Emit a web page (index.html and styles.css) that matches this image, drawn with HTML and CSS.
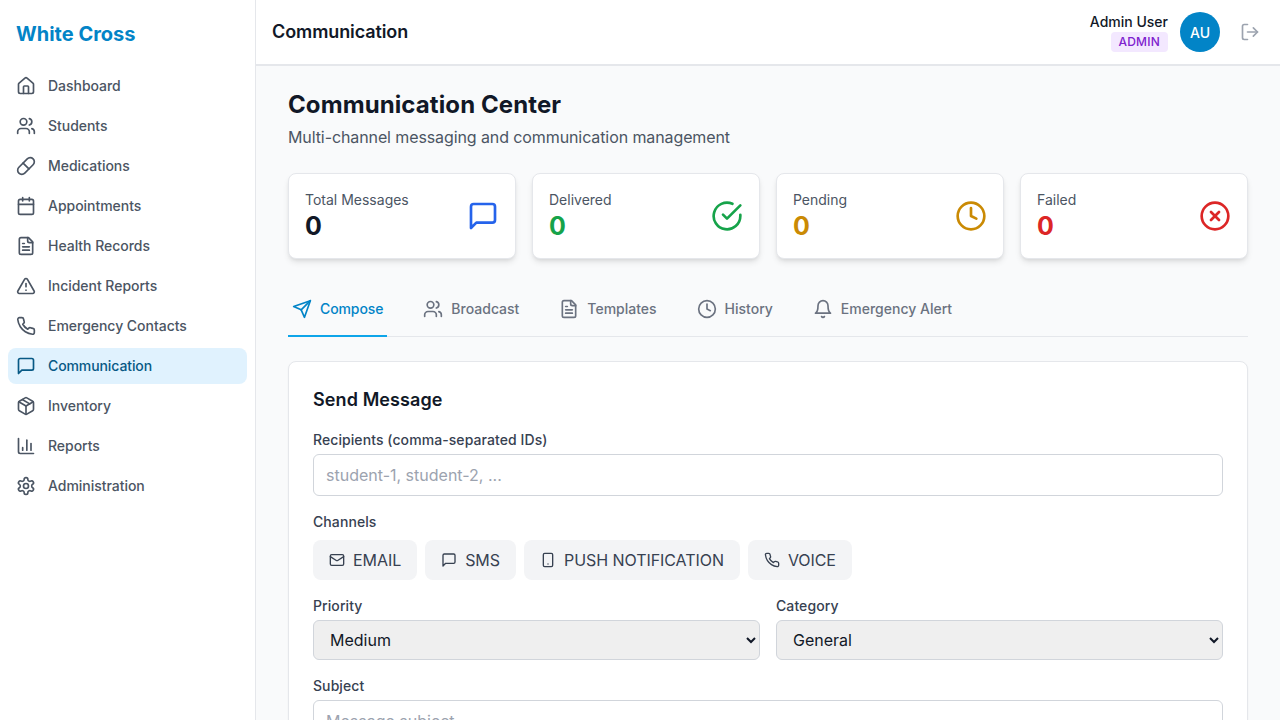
FILE: index.html
```html
<!DOCTYPE html>
<html lang="en">
<head>
    <meta charset="UTF-8">
    <meta name="viewport" content="width=device-width, initial-scale=1.0">
    <title>Communication - White Cross</title>
    <link rel="stylesheet" href="styles.css">
</head>
<body>
<svg class="sprite" xmlns="http://www.w3.org/2000/svg">
    <symbol id="i-house" viewBox="0 0 24 24"><path d="M15 21v-8a1 1 0 0 0-1-1h-4a1 1 0 0 0-1 1v8"/><path d="M3 10a2 2 0 0 1 .709-1.528l7-5.999a2 2 0 0 1 2.582 0l7 5.999A2 2 0 0 1 21 10v9a2 2 0 0 1-2 2H5a2 2 0 0 1-2-2z"/></symbol>
    <symbol id="i-users" viewBox="0 0 24 24"><path d="M16 21v-2a4 4 0 0 0-4-4H6a4 4 0 0 0-4 4v2"/><circle cx="9" cy="7" r="4"/><path d="M22 21v-2a4 4 0 0 0-3-3.87"/><path d="M16 3.13a4 4 0 0 1 0 7.75"/></symbol>
    <symbol id="i-pill" viewBox="0 0 24 24"><path d="m10.5 20.5 10-10a4.95 4.95 0 1 0-7-7l-10 10a4.95 4.95 0 1 0 7 7Z"/><path d="m8.5 8.5 7 7"/></symbol>
    <symbol id="i-calendar" viewBox="0 0 24 24"><path d="M8 2v4"/><path d="M16 2v4"/><rect x="3" y="4" width="18" height="18" rx="2"/><path d="M3 10h18"/></symbol>
    <symbol id="i-file" viewBox="0 0 24 24"><path d="M15 2H6a2 2 0 0 0-2 2v16a2 2 0 0 0 2 2h12a2 2 0 0 0 2-2V7Z"/><path d="M14 2v4a2 2 0 0 0 2 2h4"/><path d="M10 9H8"/><path d="M16 13H8"/><path d="M16 17H8"/></symbol>
    <symbol id="i-alert" viewBox="0 0 24 24"><path d="m21.73 18-8-14a2 2 0 0 0-3.48 0l-8 14A2 2 0 0 0 4 21h16a2 2 0 0 0 1.73-3"/><path d="M12 9v4"/><path d="M12 17h.01"/></symbol>
    <symbol id="i-phone" viewBox="0 0 24 24"><path d="M22 16.92v3a2 2 0 0 1-2.18 2 19.79 19.79 0 0 1-8.63-3.07 19.5 19.5 0 0 1-6-6 19.79 19.79 0 0 1-3.07-8.67A2 2 0 0 1 4.11 2h3a2 2 0 0 1 2 1.72 12.84 12.84 0 0 0 .7 2.81 2 2 0 0 1-.45 2.11L8.09 9.91a16 16 0 0 0 6 6l1.27-1.27a2 2 0 0 1 2.11-.45 12.84 12.84 0 0 0 2.81.7A2 2 0 0 1 22 16.92z"/></symbol>
    <symbol id="i-message" viewBox="0 0 24 24"><path d="M21 15a2 2 0 0 1-2 2H7l-4 4V5a2 2 0 0 1 2-2h14a2 2 0 0 1 2 2z"/></symbol>
    <symbol id="i-package" viewBox="0 0 24 24"><path d="M11 21.73a2 2 0 0 0 2 0l7-4A2 2 0 0 0 21 16V8a2 2 0 0 0-1-1.73l-7-4a2 2 0 0 0-2 0l-7 4A2 2 0 0 0 3 8v8a2 2 0 0 0 1 1.73z"/><path d="M12 22V12"/><path d="m3.3 7 8.7 5 8.7-5"/><path d="m7.5 4.27 9 5.15"/></symbol>
    <symbol id="i-chart" viewBox="0 0 24 24"><path d="M3 3v16a2 2 0 0 0 2 2h16"/><path d="M18 17V9"/><path d="M13 17V5"/><path d="M8 17v-3"/></symbol>
    <symbol id="i-settings" viewBox="0 0 24 24"><path d="M12.22 2h-.44a2 2 0 0 0-2 2v.18a2 2 0 0 1-1 1.73l-.43.25a2 2 0 0 1-2 0l-.15-.08a2 2 0 0 0-2.73.73l-.22.38a2 2 0 0 0 .73 2.73l.15.1a2 2 0 0 1 1 1.72v.51a2 2 0 0 1-1 1.74l-.15.09a2 2 0 0 0-.73 2.73l.22.38a2 2 0 0 0 2.73.73l.15-.08a2 2 0 0 1 2 0l.43.25a2 2 0 0 1 1 1.73V20a2 2 0 0 0 2 2h.44a2 2 0 0 0 2-2v-.18a2 2 0 0 1 1-1.73l.43-.25a2 2 0 0 1 2 0l.15.08a2 2 0 0 0 2.73-.73l.22-.39a2 2 0 0 0-.73-2.73l-.15-.08a2 2 0 0 1-1-1.74v-.5a2 2 0 0 1 1-1.74l.15-.09a2 2 0 0 0 .73-2.73l-.22-.38a2 2 0 0 0-2.73-.73l-.15.08a2 2 0 0 1-2 0l-.43-.25a2 2 0 0 1-1-1.73V4a2 2 0 0 0-2-2z"/><circle cx="12" cy="12" r="3"/></symbol>
    <symbol id="i-logout" viewBox="0 0 24 24"><path d="M9 21H5a2 2 0 0 1-2-2V5a2 2 0 0 1 2-2h4"/><polyline points="16 17 21 12 16 7"/><line x1="21" y1="12" x2="9" y2="12"/></symbol>
    <symbol id="i-check" viewBox="0 0 24 24"><path d="M22 11.08V12a10 10 0 1 1-5.93-9.14"/><path d="m9 11 3 3L22 4"/></symbol>
    <symbol id="i-clock" viewBox="0 0 24 24"><circle cx="12" cy="12" r="10"/><polyline points="12 6 12 12 16 14"/></symbol>
    <symbol id="i-xcircle" viewBox="0 0 24 24"><circle cx="12" cy="12" r="10"/><path d="m15 9-6 6"/><path d="m9 9 6 6"/></symbol>
    <symbol id="i-send" viewBox="0 0 24 24"><path d="m22 2-7 20-4-9-9-4Z"/><path d="M22 2 11 13"/></symbol>
    <symbol id="i-bell" viewBox="0 0 24 24"><path d="M6 8a6 6 0 0 1 12 0c0 7 3 9 3 9H3s3-2 3-9"/><path d="M10.3 21a1.94 1.94 0 0 0 3.4 0"/></symbol>
    <symbol id="i-mail" viewBox="0 0 24 24"><rect x="2" y="4" width="20" height="16" rx="2"/><path d="m22 7-8.97 5.7a1.94 1.94 0 0 1-2.06 0L2 7"/></symbol>
    <symbol id="i-mobile" viewBox="0 0 24 24"><rect x="5" y="2" width="14" height="20" rx="2"/><path d="M12 18h.01"/></symbol>
</svg>

<div class="app">
    <aside class="sidebar">
        <div class="logo">White Cross</div>
        <nav class="side-nav">
            <a class="side-link"><svg class="icon"><use href="#i-house"/></svg>Dashboard</a>
            <a class="side-link"><svg class="icon"><use href="#i-users"/></svg>Students</a>
            <a class="side-link"><svg class="icon"><use href="#i-pill"/></svg>Medications</a>
            <a class="side-link"><svg class="icon"><use href="#i-calendar"/></svg>Appointments</a>
            <a class="side-link"><svg class="icon"><use href="#i-file"/></svg>Health Records</a>
            <a class="side-link"><svg class="icon"><use href="#i-alert"/></svg>Incident Reports</a>
            <a class="side-link"><svg class="icon"><use href="#i-phone"/></svg>Emergency Contacts</a>
            <a class="side-link active"><svg class="icon"><use href="#i-message"/></svg>Communication</a>
            <a class="side-link"><svg class="icon"><use href="#i-package"/></svg>Inventory</a>
            <a class="side-link"><svg class="icon"><use href="#i-chart"/></svg>Reports</a>
            <a class="side-link"><svg class="icon"><use href="#i-settings"/></svg>Administration</a>
        </nav>
    </aside>

    <div class="page">
        <header class="topbar">
            <div class="topbar-title">Communication</div>
            <div class="user">
                <div class="user-info">
                    <div class="user-name">Admin User</div>
                    <span class="user-role">ADMIN</span>
                </div>
                <div class="avatar">AU</div>
                <button class="logout"><svg class="icon"><use href="#i-logout"/></svg></button>
            </div>
        </header>

        <main class="main">
            <h1 class="heading">Communication Center</h1>
            <p class="subheading">Multi-channel messaging and communication management</p>

            <section class="stats">
                <div class="stat">
                    <div>
                        <div class="stat-label">Total Messages</div>
                        <div class="stat-value">0</div>
                    </div>
                    <svg class="stat-icon blue"><use href="#i-message"/></svg>
                </div>
                <div class="stat">
                    <div>
                        <div class="stat-label">Delivered</div>
                        <div class="stat-value green">0</div>
                    </div>
                    <svg class="stat-icon green"><use href="#i-check"/></svg>
                </div>
                <div class="stat">
                    <div>
                        <div class="stat-label">Pending</div>
                        <div class="stat-value yellow">0</div>
                    </div>
                    <svg class="stat-icon yellow"><use href="#i-clock"/></svg>
                </div>
                <div class="stat">
                    <div>
                        <div class="stat-label">Failed</div>
                        <div class="stat-value red">0</div>
                    </div>
                    <svg class="stat-icon red"><use href="#i-xcircle"/></svg>
                </div>
            </section>

            <nav class="tabs">
                <a class="tab active"><svg class="icon"><use href="#i-send"/></svg>Compose</a>
                <a class="tab"><svg class="icon"><use href="#i-users"/></svg>Broadcast</a>
                <a class="tab"><svg class="icon"><use href="#i-file"/></svg>Templates</a>
                <a class="tab"><svg class="icon"><use href="#i-clock"/></svg>History</a>
                <a class="tab"><svg class="icon"><use href="#i-bell"/></svg>Emergency Alert</a>
            </nav>

            <section class="panel">
                <h2 class="panel-title">Send Message</h2>

                <div class="field">
                    <label class="label">Recipients (comma-separated IDs)</label>
                    <input class="input" type="text" placeholder="student-1, student-2, ...">
                </div>

                <div class="field">
                    <label class="label label-channels">Channels</label>
                    <div class="channels">
                        <button class="channel"><svg class="icon-sm"><use href="#i-mail"/></svg>EMAIL</button>
                        <button class="channel"><svg class="icon-sm"><use href="#i-message"/></svg>SMS</button>
                        <button class="channel"><svg class="icon-sm"><use href="#i-mobile"/></svg>PUSH NOTIFICATION</button>
                        <button class="channel"><svg class="icon-sm"><use href="#i-phone"/></svg>VOICE</button>
                    </div>
                </div>

                <div class="field-row">
                    <div>
                        <label class="label">Priority</label>
                        <select class="select">
                            <option>Medium</option>
                            <option>Low</option>
                            <option>High</option>
                        </select>
                    </div>
                    <div>
                        <label class="label">Category</label>
                        <select class="select">
                            <option>General</option>
                            <option>Emergency</option>
                        </select>
                    </div>
                </div>

                <div class="field">
                    <label class="label">Subject</label>
                    <input class="input" type="text" placeholder="Message subject">
                </div>
            </section>
        </main>
    </div>
</div>
</body>
</html>
```

FILE: styles.css
```css
* {
    box-sizing: border-box;
}
html, body {
    height: 100%;
}
body {
    margin: 0;
    overflow: hidden;
    font-family: Inter, "Noto Sans", sans-serif;
    color: #111827;
    background: #f9fafb;
}
.sprite {
    display: none;
}
.icon, .icon-sm, .stat-icon {
    flex: none;
    fill: none;
    stroke: currentColor;
    stroke-width: 2;
    stroke-linecap: round;
    stroke-linejoin: round;
}
.icon {
    width: 20px;
    height: 20px;
}
.icon-sm {
    width: 16px;
    height: 16px;
}
.app {
    display: flex;
    height: 100vh;
}

/* sidebar */
.sidebar {
    flex: none;
    width: 256px;
    background: #fff;
    border-right: 1px solid #e5e7eb;
}
.logo {
    padding: 20px 16px;
    font-size: 20px;
    line-height: 28px;
    font-weight: 700;
    color: #0284c7;
}
.side-nav {
    display: flex;
    flex-direction: column;
    gap: 4px;
    padding: 0 8px;
}
.side-link {
    display: flex;
    align-items: center;
    gap: 12px;
    height: 36px;
    padding: 0 8px;
    border-radius: 8px;
    font-size: 14px;
    line-height: 20px;
    font-weight: 460;
    letter-spacing: -.03px;
    color: #4b5563;
}
.side-link.active {
    background: #e0f2fe;
    color: #075985;
    letter-spacing: -.1px;
}

/* top bar */
.page {
    flex: 1;
    min-width: 0;
    display: flex;
    flex-direction: column;
}
.topbar {
    flex: none;
    display: flex;
    align-items: center;
    justify-content: space-between;
    height: 66px;
    padding: 0 12px 0 16px;
    background: #fff;
    border-bottom: 2px solid #e5e7eb;
}
.topbar-title {
    font-size: 18px;
    line-height: 28px;
    font-weight: 600;
    letter-spacing: -.1px;
}
.user {
    display: flex;
    align-items: center;
    gap: 12px;
}
.user-info {
    display: flex;
    flex-direction: column;
    align-items: flex-end;
}
.user-name {
    font-size: 14px;
    line-height: 20px;
    font-weight: 460;
}
.user-role {
    padding: 2px 8px;
    border-radius: 4px;
    background: #f3e8ff;
    color: #7e22ce;
    font-size: 12px;
    line-height: 16px;
    font-weight: 500;
    letter-spacing: .2px;
}
.avatar {
    display: flex;
    align-items: center;
    justify-content: center;
    width: 40px;
    height: 40px;
    border-radius: 50%;
    background: #0284c7;
    color: #fff;
    font-size: 14px;
    font-weight: 460;
}
.logout {
    display: flex;
    padding: 8px;
    border: 0;
    background: none;
    color: #9ca3af;
}

/* main */
.main {
    flex: 1;
    overflow: hidden;
    padding: 23px 32px;
}
.heading {
    margin: 0 0 4px;
    font-size: 24px;
    line-height: 32px;
    font-weight: 700;
    letter-spacing: .1px;
}
.subheading {
    margin: 0 0 24px;
    font-size: 16px;
    line-height: 24px;
    letter-spacing: -.1px;
    color: #4b5563;
}
.stats {
    display: grid;
    grid-template-columns: repeat(4, 1fr);
    gap: 16px;
    margin-bottom: 24px;
}
.stat {
    display: flex;
    align-items: center;
    justify-content: space-between;
    padding: 16px;
    background: #fff;
    border: 1px solid #e5e7eb;
    border-radius: 8px;
    box-shadow: 0 4px 6px -1px rgba(0, 0, 0, .1), 0 2px 4px -2px rgba(0, 0, 0, .1);
}
.stat-label {
    font-size: 14px;
    line-height: 20px;
    color: #4b5563;
}
.stat-value {
    font-size: 25px;
    line-height: 32px;
    font-weight: 700;
}
.stat-icon {
    width: 32px;
    height: 32px;
}
.blue { color: #2563eb; }
.green { color: #16a34a; }
.yellow { color: #ca8a04; }
.red { color: #dc2626; }

/* tabs */
.tabs {
    display: flex;
    gap: 32px;
    margin-bottom: 24px;
    border-bottom: 1px solid #e5e7eb;
}
.tab {
    display: flex;
    align-items: center;
    gap: 8px;
    padding: 16px 4px;
    margin-bottom: -1px;
    border-bottom: 2px solid transparent;
    font-size: 14px;
    line-height: 20px;
    font-weight: 460;
    color: #6b7280;
}
.tab.active {
    border-bottom-color: #0ea5e9;
    color: #0284c7;
    letter-spacing: -.1px;
}

/* form */
.panel {
    padding: 24px;
    background: #fff;
    border: 1px solid #e5e7eb;
    border-radius: 8px;
    box-shadow: 0 1px 2px rgba(0, 0, 0, .05);
}
.panel-title {
    margin: 0 0 16px;
    font-size: 18px;
    line-height: 28px;
    font-weight: 600;
    letter-spacing: .1px;
}
.field, .field-row {
    margin-bottom: 16px;
}
.field-row {
    display: grid;
    grid-template-columns: 1fr 1fr;
    gap: 16px;
}
.label {
    display: block;
    margin-bottom: 4px;
    font-size: 14px;
    line-height: 20px;
    font-weight: 460;
    letter-spacing: .08px;
    color: #374151;
}
.label-channels {
    margin-bottom: 8px;
}
.input {
    display: block;
    width: 100%;
    padding: 8px 12px;
    border: 1px solid #d1d5db;
    border-radius: 6px;
    background: #fff;
    font: 16px/24px Inter, "Noto Sans", sans-serif;
    color: #111827;
}
.input::placeholder {
    color: #9ca3af;
}
.channels {
    display: flex;
    gap: 8px;
}
.channel {
    display: flex;
    align-items: center;
    gap: 8px;
    padding: 8px 16px;
    border: 0;
    border-radius: 8px;
    background: #f3f4f6;
    font: 16px/24px Inter, "Noto Sans", sans-serif;
    letter-spacing: -.06px;
    color: #374151;
}
.select {
    display: block;
    width: 100%;
    height: 40px;
    padding: 8px 12px;
    border: 1px solid #d1d5db;
    border-radius: 6px;
    font: 16px/24px Inter, "Noto Sans", sans-serif;
    color: #111827;
}
```
